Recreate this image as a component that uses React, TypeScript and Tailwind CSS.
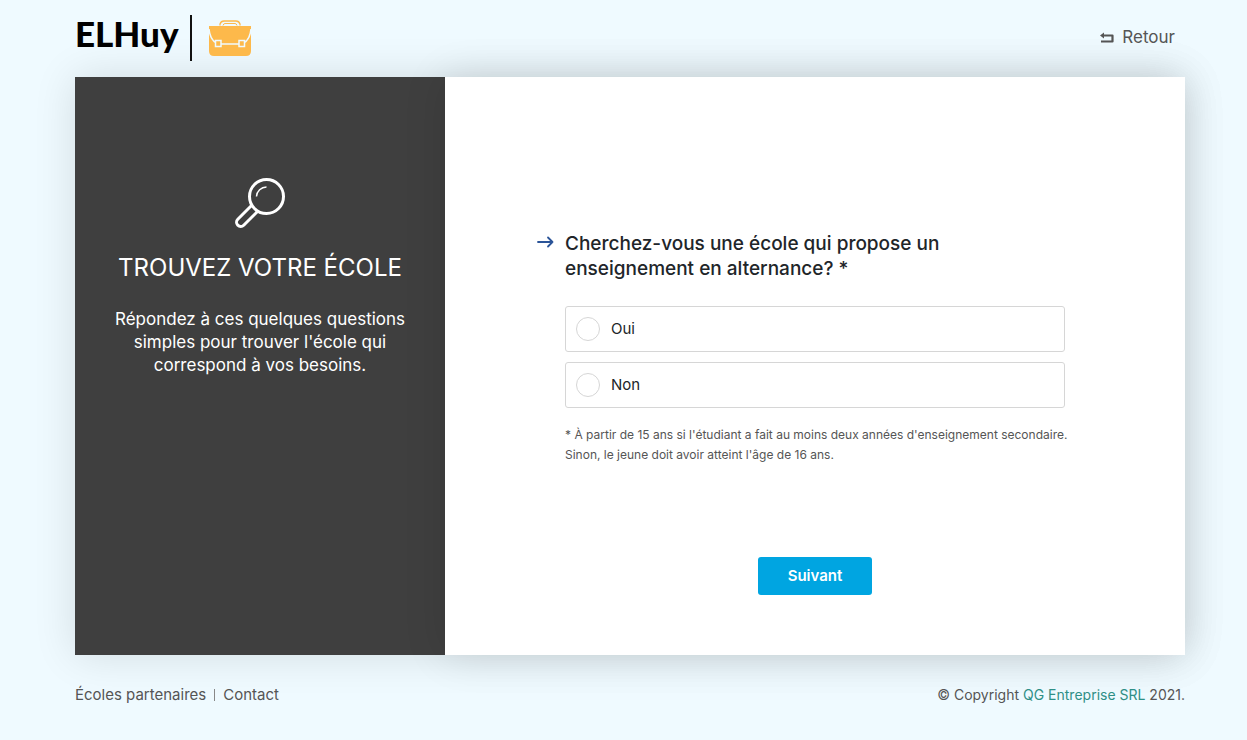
import React from "react";

const answers = [
  { value: "oui", label: "Oui" },
  { value: "non", label: "Non" },
];

const BriefcaseIcon = () => (
  <svg width="42" height="36" viewBox="0 0 42 36" fill="none" aria-hidden="true">
    <path d="M11 5.500V4Q12 1 15 1H27Q30 1 31 4V5.500" stroke="#fdb94b" strokeWidth="1.3" />
    <path d="M14 5.500Q14.500 3.500 16 3.500H26Q27.500 3.500 28 5.500" stroke="#fdb94b" strokeWidth="1" />
    <path d="M0 6H42V31Q42 36 37 36H5Q0 36 0 31Z" fill="#fdb94b" />
    <path
      d="M0 9Q1 19 7 23M42 9Q41 19 35 23M12 24H30M6.500 20.500H12V26.500H6.500ZM30 20.500H35.500V26.500H30Z"
      stroke="#effaff"
      strokeWidth="1.5"
    />
  </svg>
);

const ReturnIcon = () => (
  <svg width="14" height="12" viewBox="0 0 14 12" fill="none" aria-hidden="true">
    <path d="M2 3.500H12.500V9.500H1" stroke="currentColor" strokeWidth="2.2" strokeLinejoin="round" />
    <path d="M0 3.500L4 0.500V6.500Z" fill="currentColor" />
  </svg>
);

const MagnifierIcon = () => (
  <svg width="50" height="50" viewBox="0 0 50 50" fill="none" stroke="white" aria-hidden="true">
    <circle cx="31.5" cy="18.5" r="17" strokeWidth="3" />
    <path d="M21.500 18.500A10 10 0 0 1 31.500 9" strokeWidth="1.5" />
    <path
      d="M16.500 27.500L2.800 41.200A4.200 4.200 0 0 0 8.700 47.200L22.500 33.500"
      strokeWidth="3"
      strokeLinejoin="round"
    />
  </svg>
);

const ArrowIcon = () => (
  <svg width="17" height="12" viewBox="0 0 17 12" fill="none" stroke="#2b5498" aria-hidden="true">
    <path d="M1 6H15.500M11 1.500L15.500 6L11 10.500" strokeWidth="1.8" strokeLinecap="round" strokeLinejoin="round" />
  </svg>
);

const App = () => {
  return (
    <div className="min-h-screen bg-[#effaff] pl-[75px] pr-[62px] font-[Inter,sans-serif] text-[#555]">
      {/* Header */}
      <header className="flex h-[77px] items-center justify-between pb-px">
        <a href="/" className="flex items-center text-black">
          <span className="w-[115px] self-start font-[Lato,sans-serif] text-[35px] leading-[36px] font-black">ELHuy</span>
          <span className="mr-[17px] h-[46px] w-0.5 bg-[#111]" />
          <BriefcaseIcon />
        </a>
        <a href="/retour" className="mr-2.5 flex items-center gap-2 text-[17px]">
          <ReturnIcon />
          Retour
        </a>
      </header>

      {/* Survey card */}
      <main className="flex min-h-[578px] shadow-[0_0_40px_rgba(0,0,0,0.12)]">
        <section className="w-1/3 bg-[#3f3f3f] px-8 pt-[101px] text-center text-white">
          <div className="flex justify-center">
            <MagnifierIcon />
          </div>
          <h1 className="mt-6 text-[24px] leading-8">TROUVEZ VOTRE ÉCOLE</h1>
          <p className="mt-6 text-[17px] leading-[23px]">
            Répondez à ces quelques questions
            <br />
            simples pour trouver l'école qui
            <br />
            correspond à vos besoins.
          </p>
        </section>

        <form className="w-2/3 bg-white px-[120px] pt-[154px] shadow-[0_0_40px_rgba(0,0,0,0.12)]">
          <fieldset>
            <legend className="-ml-7 flex gap-[11px] text-[19px] leading-[25px] font-medium text-[#212529]">
              <span className="pt-[5px]">
                <ArrowIcon />
              </span>
              <span>
                Cherchez-vous une école qui propose un
                <br />
                enseignement en alternance? *
              </span>
            </legend>
            <div className="mt-[25px] flex flex-col gap-2.5">
              {answers.map((answer) => (
                <label
                  key={answer.value}
                  className="flex h-[46px] cursor-pointer items-center gap-[11px] rounded-[3px] border border-[#d6d6d6] px-2.5 text-[15px] text-[#212529]"
                >
                  <input
                    type="radio"
                    name="alternance"
                    value={answer.value}
                    className="size-6 cursor-pointer appearance-none rounded-full border border-[#d6d6d6] bg-white checked:bg-[#00a5e1]"
                  />
                  {answer.label}
                </label>
              ))}
            </div>
          </fieldset>
          <p className="mt-[17px] text-[12px] leading-5 whitespace-nowrap">
            * À partir de 15 ans si l'étudiant a fait au moins deux années d'enseignement secondaire.
            <br />
            Sinon, le jeune doit avoir atteint l'âge de 16 ans.
          </p>
          <div className="mt-[92px] flex justify-center">
            <button
              type="submit"
              className="h-[38px] w-[114px] cursor-pointer rounded-[3px] bg-[#00a5e1] text-[15px] font-semibold text-white"
            >
              Suivant
            </button>
          </div>
        </form>
      </main>

      {/* Footer */}
      <footer className="flex items-center justify-between pt-[30px] text-[15px] leading-5">
        <nav className="flex items-center">
          <a href="/ecoles">Écoles partenaires</a>
          <span className="mx-2 h-3 w-px bg-[#888]" />
          <a href="/contact">Contact</a>
        </nav>
        <p className="text-sm">
          © Copyright <a href="/qg" className="text-[#2f8f86]">QG Entreprise SRL</a> 2021.
        </p>
      </footer>
    </div>
  );
};

export default App;
